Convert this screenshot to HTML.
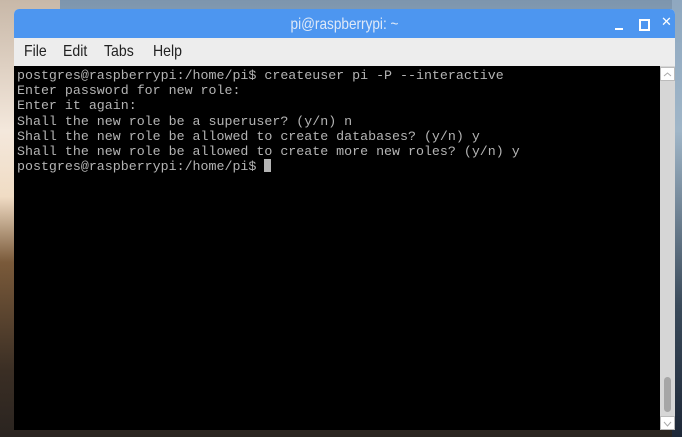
<!DOCTYPE html>
<html><head><style>
body{margin:0;width:682px;height:437px;overflow:hidden;position:relative;
background:linear-gradient(180deg,#7d95ad 0%,#9fb3c4 20%,#c9c7bd 40%,#8a6d4d 52%,#4a3b2c 70%,#2a2520 100%);}
.bgl{position:absolute;left:0;top:0;width:60px;height:437px;background:linear-gradient(180deg,#c8b8a8 0%,#f4e8dc 30%,#f0dcc4 45%,#7a5a3a 60%,#3a2e24 85%,#2a2420 100%);}
.bgr{position:absolute;right:0;top:0;width:10px;height:437px;background:linear-gradient(180deg,#8fa8c0 0%,#a0b6c8 30%,#3a4a5a 70%,#1e2838 100%);}
.win{position:absolute;left:14px;top:9px;width:661px;height:421px;background:#ededed;border-radius:5px 5px 0 0;overflow:hidden;}
.title{height:29px;background:#4d96f0;position:relative;}
.tt{position:absolute;left:0;right:0;top:0;text-align:center;color:#dfe9f7;font:16px "Liberation Sans",sans-serif;line-height:31px;transform:scaleX(0.85);}
.c{position:absolute;color:#fff;font:bold 13px "DejaVu Sans",sans-serif;}
.menu{height:28px;position:relative;font:16px "Liberation Sans",sans-serif;color:#222;}
.menu span{position:absolute;top:5px;transform:scaleX(0.88);transform-origin:left;}
.term{position:absolute;left:0;top:57px;width:646px;height:364px;background:#000;color:#b4b4b4;font:13.3px/15.2px "Liberation Mono",monospace;padding:2px 0 0 3px;box-sizing:border-box;white-space:pre;}
.sb{position:absolute;left:646px;top:57px;width:15px;height:364px;background:#d6d6d6;}
.thumb{position:absolute;left:4px;top:311px;width:7px;height:35px;border-radius:4px;background:#a6a6a6;}
.btn{position:absolute;left:0;width:13px;height:12px;background:#fff;border:1px solid #bbb;}
.cur{display:inline-block;width:7px;height:13px;background:#b4b4b4;vertical-align:-2px;}
</style></head><body>
<div class="bgl"></div><div class="bgr"></div>
<div class="win">
<div class="title"><div class="tt">pi@raspberrypi: ~</div>
<div style="position:absolute;left:601px;top:19px;width:8px;height:2px;background:#fff"></div>
<div style="position:absolute;left:625px;top:10px;width:7px;height:8px;border:2px solid #fff"></div>
<div class="c" style="left:647px;top:6px">✕</div></div>
<div class="menu"><span style="left:10px">File</span><span style="left:49px">Edit</span><span style="left:90px">Tabs</span><span style="left:139px">Help</span></div>
<div class="term">postgres@raspberrypi:/home/pi$ createuser pi -P --interactive
Enter password for new role:
Enter it again:
Shall the new role be a superuser? (y/n) n
Shall the new role be allowed to create databases? (y/n) y
Shall the new role be allowed to create more new roles? (y/n) y
postgres@raspberrypi:/home/pi$ <span class="cur"></span></div>
<div class="sb"><div class="btn" style="top:1px"><svg width="13" height="12"><path d="M3 7L6.5 4L10 7" stroke="#aaa" fill="none"/></svg></div><div class="thumb"></div><div class="btn" style="top:350px"><svg width="13" height="12"><path d="M3 4L6.5 8L10 4" stroke="#aaa" fill="none"/></svg></div></div>
</div>
</body></html>
